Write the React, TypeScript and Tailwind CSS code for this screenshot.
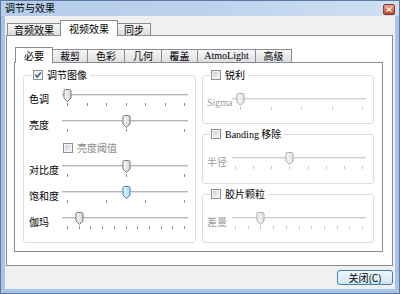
import { useId } from "react";

const CJK = "font-['Noto_Sans_CJK_SC','Noto_Sans',sans-serif]";
const SERIF = "font-['Liberation_Serif','Noto_Sans_CJK_SC',serif]";

function useSafeId() {
    return useId().replace(/[^a-zA-Z0-9]/g, "");
}

function Check({ checked = false }: { checked?: boolean }) {
    const id = useSafeId();
    return (
        <svg width={10} height={10} className="block shrink-0">
            <defs>
                <linearGradient id={id} x1="0" y1="0" x2="1" y2="1">
                    <stop offset="0" stopColor="#cbd0d6" />
                    <stop offset="1" stopColor="#f6f6f6" />
                </linearGradient>
            </defs>
            <rect x={0.5} y={0.5} width={9} height={9} fill="#f5f5f5" stroke="#8e8f8f" />
            {checked ? (
                <path d="M2.2 4.8 L4.1 7 L7.9 2.4" fill="none" stroke="#3b5b98" strokeWidth={1.6} />
            ) : (
                <rect x={2} y={2} width={6} height={6} fill={`url(#${id})`} />
            )}
        </svg>
    );
}

type SliderProps = { w: number; n: number; t0: number; t1: number; at: number; off?: boolean; hot?: boolean };

// at: thumb position in tick units (may be fractional)
function Slider({ w, n, t0, t1, at, off = false, hot = false }: SliderProps) {
    const id = useSafeId();
    const xs = Array.from({ length: n }, (_, i) => Math.round(t0 + ((t1 - t0) * i) / (n - 1)));
    const cx = Math.round(t0 + ((t1 - t0) * at) / (n - 1)) + 0.5;
    const thumb = `M${cx - 3.5} 2 Q${cx - 3.5} 0.5 ${cx - 2} 0.5 H${cx + 2} Q${cx + 3.5} 0.5 ${cx + 3.5} 2 V9 L${cx} 12.5 L${cx - 3.5} 9 Z`;
    const top = hot ? "#eaf6fd" : off ? "#f8f8f8" : "#fbfbfb";
    const bottom = hot ? "#a7d7f4" : off ? "#e2e2e2" : "#d3d3d3";
    const edge = hot ? "#3c7fb1" : off ? "#a9a9a9" : "#777777";
    return (
        <svg width={w} height={18} className="block shrink-0">
            <defs>
                <linearGradient id={id} x1="0" y1="0" x2="1" y2="0">
                    <stop offset="0" stopColor={top} />
                    <stop offset="1" stopColor={bottom} />
                </linearGradient>
            </defs>
            <rect x={0} y={5} width={w} height={1} fill={off ? "#d0d0d0" : "#b6b6b6"} />
            <rect x={0} y={6} width={w} height={1} fill={off ? "#ececec" : "#e2e2e2"} />
            {xs.map((x, i) => (
                <rect key={i} x={x} y={14} width={1} height={3} fill={off ? "#c6c6c6" : "#8f8f8f"} />
            ))}
            <path d={thumb} fill={`url(#${id})`} stroke={edge} strokeWidth={1} />
        </svg>
    );
}

function Tab({ label, w, selected = false, first = false, h, serif = false }: { label: string; w: number; selected?: boolean; first?: boolean; h: number; serif?: boolean }) {
    return (
        <div
            style={{ width: w, height: h }}
            className={`flex items-center justify-center border border-b-0 border-[#898c95] text-[10px] leading-none text-black ${first ? "" : "-ml-px"} ${serif ? SERIF : ""} ${
                selected ? "relative z-10 -mb-px bg-white" : "bg-linear-to-b from-[#f7f7f7] to-[#dedede]"
            }`}
        >
            {label}
        </div>
    );
}

function Legend({ label, checked = false }: { label: React.ReactNode; checked?: boolean }) {
    return (
        <legend className="ml-[3px] pl-px pr-[3px]">
            <div className="flex items-center gap-[4px] h-[12px]">
                <Check checked={checked} />
                <span className="text-[10px] leading-[12px] text-black">{label}</span>
            </div>
        </legend>
    );
}

function Row({ label, grey = false, labelW, children, serif = false }: { label: string; grey?: boolean; labelW: number; children: React.ReactNode; serif?: boolean }) {
    return (
        <div className="flex items-start h-[26px]">
            <span
                style={{ width: labelW }}
                className={`shrink-0 text-[10px] leading-[20px] ${grey ? "text-[#9d9d9d]" : "text-black"} ${serif ? SERIF : ""}`}
            >
                {label}
            </span>
            {children}
        </div>
    );
}

export default function App() {
    return (
        <div className={`w-[400px] h-[294px] flex flex-col border border-[#5a7aa3] bg-[#a8c3e6] ${CJK}`}>
            {/* Title bar */}
            <div className="h-[15px] flex items-start justify-between pl-[4px] pr-[4px] bg-linear-to-r from-[#b5cdea] via-[#bcd2ec] to-[#cfe0f3]">
                <span className="text-[10px] leading-[14px] text-black">调节与效果</span>
                <div className="mt-[3px] w-[12px] h-[11px] rounded-[2px] border border-[#8a3b2c] bg-linear-to-b from-[#e9a594] to-[#c3432b] flex items-center justify-center">
                    <svg width={6} height={5}>
                        <path d="M0.5 0.5 L5.5 4.5 M5.5 0.5 L0.5 4.5" stroke="#f4f4f4" strokeWidth={1.3} />
                    </svg>
                </div>
            </div>

            {/* Client */}
            <div className="flex-1 mx-[4px] mb-[4px] bg-[#f0f0f0] flex flex-col pt-[4px] pb-[4px]">
                <div className="ml-[1px] w-[387px] flex flex-col">
                    <div className="flex items-end h-[15px] pl-[1px]">
                        <Tab label="音频效果" w={54} h={12} first />
                        <Tab label="视频效果" w={58} h={16} selected />
                        <Tab label="同步" w={34} h={12} />
                    </div>
                    <div className="h-[231px] border border-[#898c95] bg-white pt-[11px] pl-[7px]">
                        {/* Inner tabs */}
                        <div className="flex items-end h-[15px] pl-[1px]">
                            <Tab label="必要" w={38} h={16} selected first />
                            <Tab label="裁剪" w={36} h={13} />
                            <Tab label="色彩" w={38} h={13} />
                            <Tab label="几何" w={38} h={13} />
                            <Tab label="覆盖" w={37} h={13} />
                            <Tab label="AtmoLight" w={59} h={13} serif />
                            <Tab label="高级" w={37} h={13} />
                        </div>
                        <div className="w-[369px] h-[190px] border border-[#898c95] bg-white pt-[6px] px-[8px] flex gap-[6px] items-start">
                            {/* Left group */}
                            <fieldset className="w-[173px] border border-[#d5dfe5] rounded-[3px] pt-[8px] pb-[4px] pl-[5px]">
                                <Legend label="调节图像" checked />
                                <Row label="色调" labelW={33}>
                                    <Slider w={126} n={7} t0={5} t1={122} at={0} />
                                </Row>
                                <Row label="亮度" labelW={33}>
                                    <Slider w={126} n={3} t0={5} t1={122} at={1} />
                                </Row>
                                <div className="flex items-start h-[19px] pl-[34px] pt-[2px] gap-[4px]">
                                    <Check />
                                    <span className="text-[10px] leading-[10px] text-[#8a8a8a]">亮度阈值</span>
                                </div>
                                <Row label="对比度" labelW={33}>
                                    <Slider w={126} n={3} t0={5} t1={122} at={1} />
                                </Row>
                                <Row label="饱和度" labelW={33}>
                                    <Slider w={126} n={4} t0={5} t1={122} at={1.5} hot />
                                </Row>
                                <Row label="伽玛" labelW={33}>
                                    <Slider w={126} n={11} t0={5} t1={122} at={1} />
                                </Row>
                            </fieldset>

                            {/* Right groups */}
                            <div className="flex flex-col gap-[4px]">
                                <fieldset className="w-[172px] border border-[#d5dfe5] rounded-[3px] pt-[12px] pb-[4px] pl-[4px]">
                                    <Legend label="锐利" />
                                    <Row label="Sigma" labelW={25} grey serif>
                                        <Slider w={134} n={5} t0={8} t1={130} at={0} off />
                                    </Row>
                                </fieldset>
                                <fieldset className="w-[172px] border border-[#d5dfe5] rounded-[3px] pt-[12px] pb-[5px] pl-[4px]">
                                    <Legend
                                        label={
                                            <>
                                                <span className={SERIF}>Banding</span> 移除
                                            </>
                                        }
                                    />
                                    <Row label="半径" labelW={25} grey>
                                        <Slider w={134} n={8} t0={3} t1={130} at={3} off />
                                    </Row>
                                </fieldset>
                                <fieldset className="w-[172px] border border-[#d5dfe5] rounded-[3px] pt-[12px] pb-[4px] pl-[4px]">
                                    <Legend label="胶片颗粒" />
                                    <Row label="差量" labelW={25} grey>
                                        <Slider w={134} n={11} t0={3} t1={130} at={2} off />
                                    </Row>
                                </fieldset>
                            </div>
                        </div>
                    </div>
                </div>
                <div className="mt-[4px] flex justify-end pr-[2px]">
                    <button className="w-[56px] h-[15px] rounded-[3px] border border-[#3c7fb1] bg-linear-to-b from-[#eef7fd] to-[#cfe6f5] text-[10px] leading-none text-black flex items-center justify-center">
                        关闭(C)
                    </button>
                </div>
            </div>
        </div>
    );
}
